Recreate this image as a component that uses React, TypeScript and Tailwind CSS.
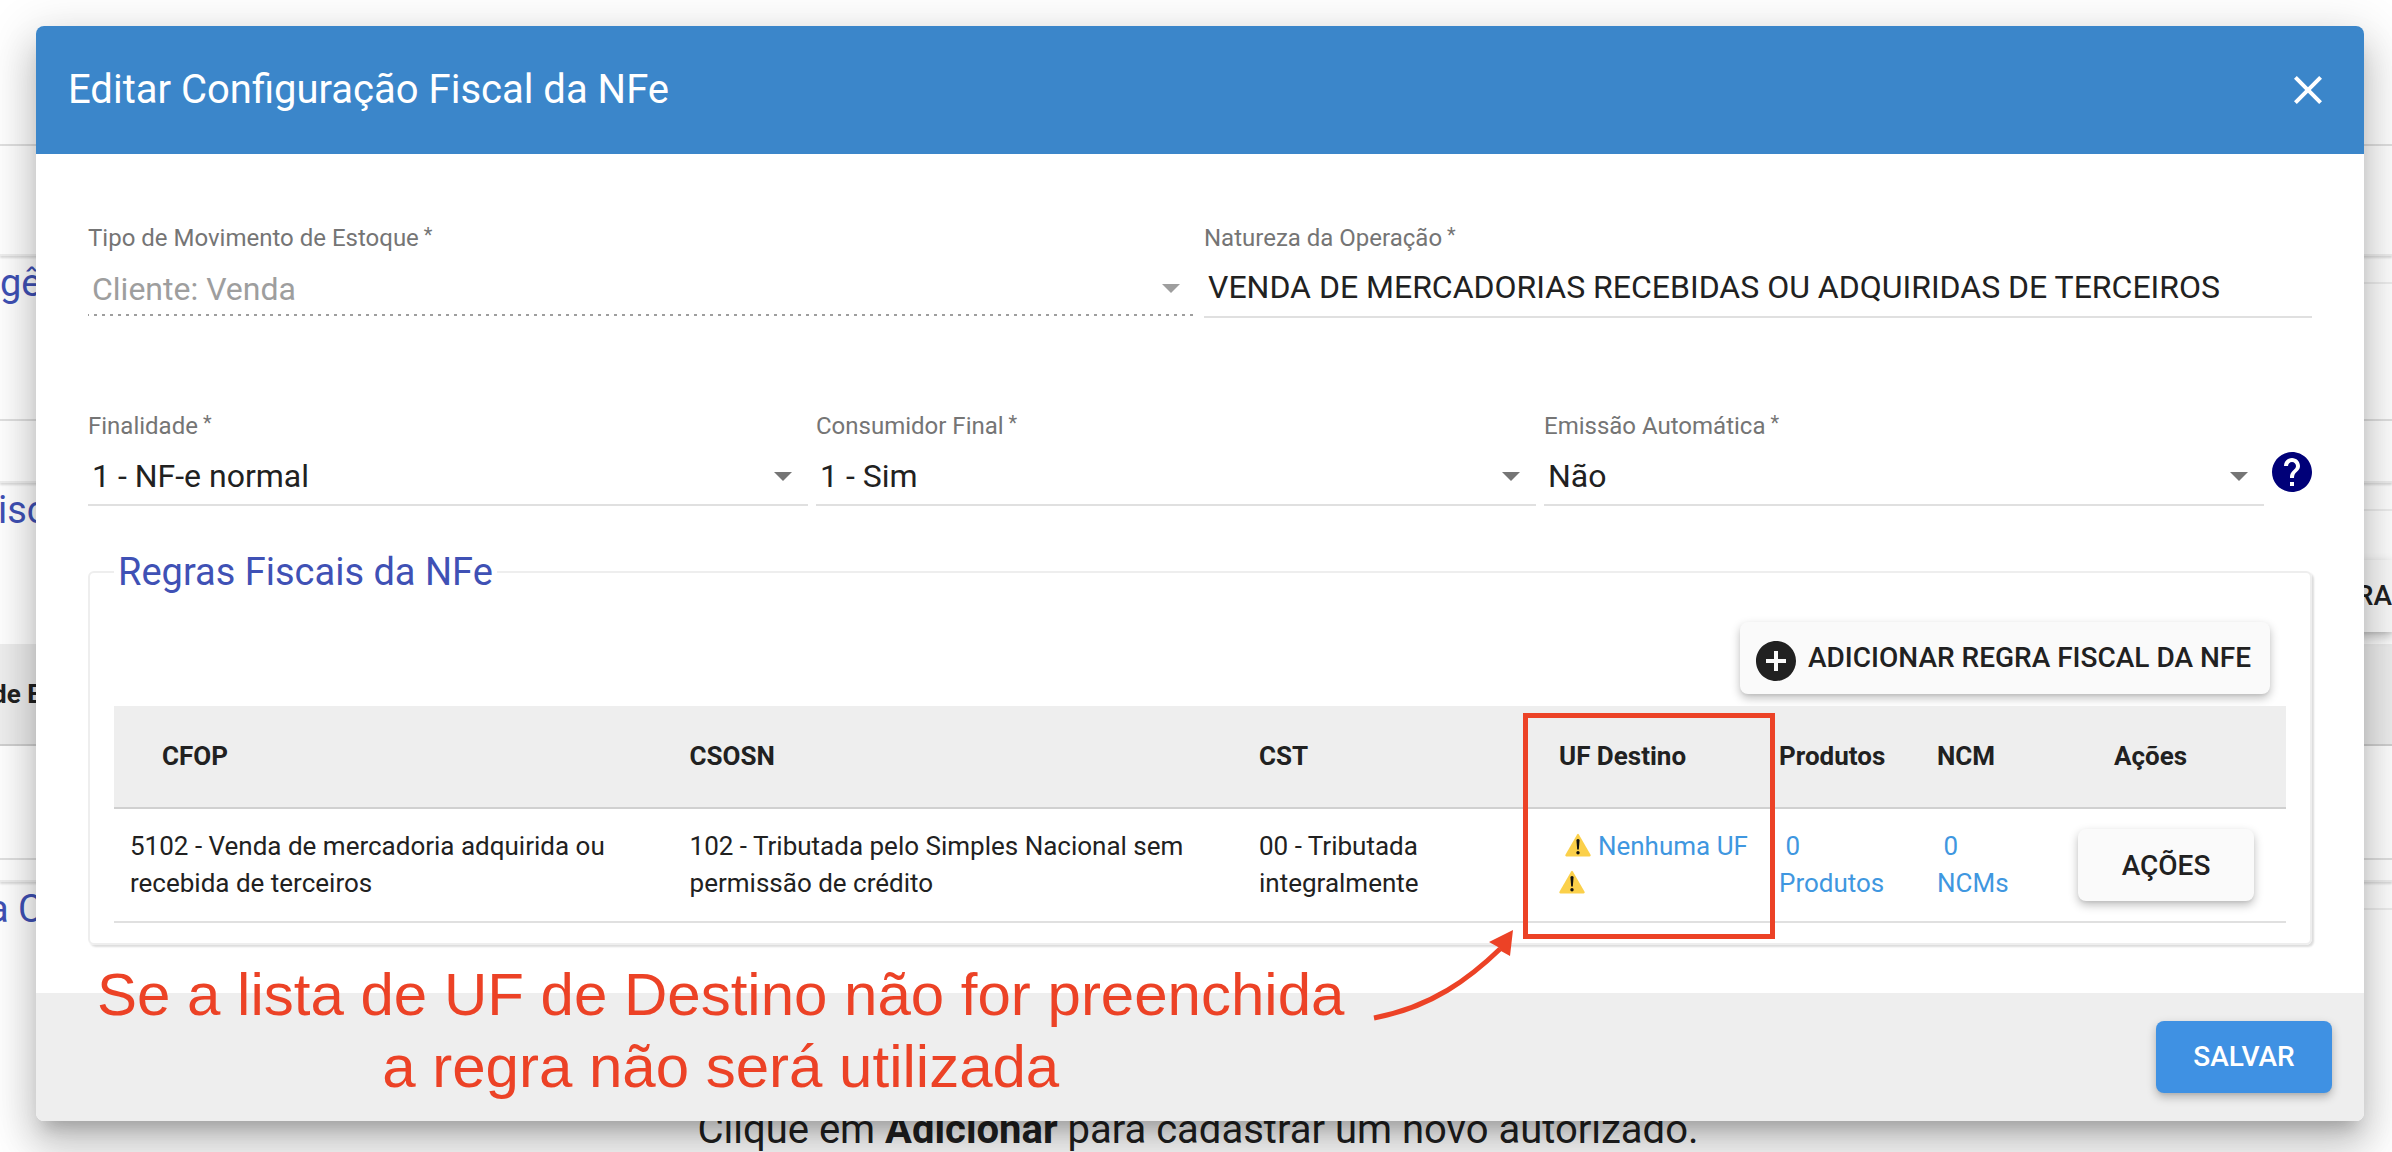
import { useState } from 'react';
import type { ReactNode } from 'react';
import { MdAddCircle, MdClose, MdHelp } from 'react-icons/md';

const raisedShadow =
	'shadow-[0_4px_10px_0_rgba(0,0,0,0.26),0_2px_2px_0_rgba(0,0,0,0.04)]';

function FieldLabel({ id, children }: { id: string; children: ReactNode }) {
	return (
		<label htmlFor={id} className="block text-2xl leading-7 text-[#757575]">
			{children}
			<span className="text-xl leading-none align-[4px]"> *</span>
		</label>
	);
}

type SelectFieldProps = {
	id: string;
	label: string;
	options: string[];
	disabled?: boolean;
};

function SelectField({ id, label, options, disabled }: SelectFieldProps) {
	const [value, setValue] = useState(options[0]);

	return (
		<div className="min-w-0 flex-1">
			<FieldLabel id={id}>{label}</FieldLabel>
			<div className="relative pt-4">
				<select
					id={id}
					value={value}
					disabled={disabled}
					onChange={(event) => setValue(event.target.value)}
					className={
						disabled
							? 'block h-12 w-full appearance-none bg-[linear-gradient(to_right,#9e9e9e_33%,transparent_0)] bg-[length:8px_2px] bg-bottom bg-repeat-x pl-1 pb-1.5 text-[32px] leading-10 text-[#9e9e9e] opacity-100'
							: 'block h-[50px] w-full appearance-none border-b-2 border-[#e0e0e0] pl-1 pb-2 text-[32px] leading-10 text-[#212121]'
					}
				>
					{options.map((option) => (
						<option key={option}>{option}</option>
					))}
				</select>
				<svg
					viewBox="0 0 18 9"
					className={
						disabled
							? 'pointer-events-none absolute right-4 top-8 h-[9px] w-[18px] fill-[#9e9e9e]'
							: 'pointer-events-none absolute right-4 top-8 h-[9px] w-[18px] fill-[#757575]'
					}
				>
					<path d="M0 0h18l-9 9z" />
				</svg>
			</div>
		</div>
	);
}

function WarningIcon() {
	return (
		<svg
			viewBox="0 0 26 24"
			className="inline-block h-6 w-[26px] align-[-2px]"
			role="img"
			aria-label="Atenção"
		>
			<path
				d="M12.1 1.4Q13 .2 13.9 1.4L25.7 22Q26 23.4 24.6 23.4H1.4Q0 23.4.3 22Z"
				fill="#fbd04a"
			/>
			<path d="M11.4 7Q13 5.2 14.6 7L13.8 16.6H12.2Z" fill="#111111" />
			<circle cx="13" cy="19.8" r="1.7" fill="#111111" />
		</svg>
	);
}

function PageLegend({ className, children }: { className?: string; children: ReactNode }) {
	return (
		<div className="flex h-[54px] items-center gap-2">
			<span className={`text-[38px] leading-[44px] text-[#3f51b5] ${className ?? ''}`}>
				{children}
			</span>
			<span className="flex-1 border-t-2 border-[#eeeeee]" />
		</div>
	);
}

// página que fica atrás do diálogo
function BackgroundPage() {
	return (
		<div className="bg-white" aria-hidden="true">
			<div className="h-[146px] border-b-2 border-[#e0e0e0]" />
			<div className="h-[110px] border-b-2 border-[#eeeeee] shadow-[0_2px_2px_#dddddd]" />
			<PageLegend>gê</PageLegend>
			<div className="h-[111px] border-b-2 border-[#e0e0e0]" />
			<div className="h-[62px] border-b-2 border-[#eeeeee] shadow-[0_2px_2px_#dddddd]" />
			<PageLegend className="-ml-0.5">isc</PageLegend>
			<div className="flex h-[107px] items-start justify-end pt-[23px]">
				<div
					className={`flex h-[72px] w-40 items-center justify-end bg-[#fafafa] text-[28px] font-medium ${raisedShadow}`}
				>
					RA
				</div>
			</div>
			<div className="flex h-[102px] items-center border-b-2 border-[#d0d0d0] bg-[#eeeeee] text-[26px] font-bold">
				<span className="-ml-2">de E</span>
			</div>
			<div className="h-[114px] border-b-2 border-[#e0e0e0]" />
			<div className="h-[22px] border-b-2 border-[#eeeeee] shadow-[0_2px_2px_#dddddd]" />
			<PageLegend className="-ml-3">a C</PageLegend>
			<p className="pl-1 pt-[174px] text-center text-[40px] leading-none">
				Clique em <b>Adicionar</b> para cadastrar um novo autorizado.
			</p>
		</div>
	);
}

function RulesTable() {
	const th = 'p-0 text-left font-bold';
	const td = 'h-[114px] border-b-2 border-[#e0e0e0] p-0';
	const link = 'text-[#3f97e0]';

	return (
		<div className="relative mt-3">
			<table className="w-full table-fixed border-separate border-spacing-0 text-[26px] leading-[37px]">
				<colgroup>
					<col className="w-[26.5%]" />
					<col />
					<col className="w-[300px]" />
					<col className="w-[220px]" />
					<col className="w-[158px]" />
					<col className="w-[141px]" />
					<col className="w-[208px]" />
				</colgroup>
				<thead>
					<tr className="h-[103px] bg-[#eeeeee] *:border-b-2 *:border-[#d0d0d0]">
						<th className={`${th} pl-12`}>CFOP</th>
						<th className={th}>CSOSN</th>
						<th className={th}>CST</th>
						<th className={th}>UF Destino</th>
						<th className={th}>Produtos</th>
						<th className={th}>NCM</th>
						<th className={`${th} pl-9`}>Ações</th>
					</tr>
				</thead>
				<tbody>
					<tr>
						<td className={`${td} pl-4 pr-14`}>
							5102 - Venda de mercadoria adquirida ou recebida de terceiros
						</td>
						<td className={`${td} pr-14`}>
							102 - Tributada pelo Simples Nacional sem permissão de crédito
						</td>
						<td className={`${td} pr-14`}>00 - Tributada integralmente</td>
						<td className={td}>
							&nbsp;
							<WarningIcon />{' '}
							<a href="#uf" className={link}>
								Nenhuma UF
							</a>
							<br />
							<WarningIcon />
						</td>
						<td className={td}>
							<a href="#produtos" className={link}>
								&nbsp;0
								<br />
								Produtos
							</a>
						</td>
						<td className={td}>
							<a href="#ncms" className={link}>
								&nbsp;0
								<br />
								NCMs
							</a>
						</td>
						<td className={td}>
							<button
								type="button"
								className={`block h-[72px] w-44 rounded-lg bg-[#fafafa] text-[28px] font-medium ${raisedShadow}`}
							>
								AÇÕES
							</button>
						</td>
					</tr>
				</tbody>
			</table>

			{/* destaque da coluna UF Destino */}
			<div className="pointer-events-none absolute right-[511px] top-[7px] h-[226px] w-[252px] border-5 border-[#ec4226]" />
			<svg
				viewBox="0 0 146 96"
				className="pointer-events-none absolute right-[770px] top-[221px] z-10 h-24 w-[146px]"
			>
				<path
					d="M4 91C62 80 100 51 130 22"
					fill="none"
					stroke="#ec4226"
					strokeWidth="5"
				/>
				<path d="M143 3L119 15L128 20L131 24L140 29Z" fill="#ec4226" />
			</svg>
		</div>
	);
}

function App() {
	const [nature, setNature] = useState(
		'VENDA DE MERCADORIAS RECEBIDAS OU ADQUIRIDAS DE TERCEIROS',
	);

	return (
		<div className="relative min-h-screen overflow-hidden font-[Roboto,sans-serif] text-[#212121]">
			<BackgroundPage />

			<div className="absolute inset-0 pl-9 pr-7 pt-[26px]">
				<div
					role="dialog"
					aria-labelledby="dialog-title"
					className="rounded-lg bg-white shadow-[0_14px_16px_-8px_rgba(0,0,0,0.2),0_26px_38px_4px_rgba(0,0,0,0.14),0_10px_48px_8px_rgba(0,0,0,0.12)]"
				>
					<header className="flex h-32 items-center justify-between rounded-t-lg bg-[#3b86ca] px-8 text-white">
						<h2 id="dialog-title" className="text-[40px] leading-[48px]">
							Editar Configuração Fiscal da NFe
						</h2>
						<button type="button" aria-label="Fechar">
							<MdClose className="size-12" />
						</button>
					</header>

					<form
						className="px-[52px] pb-12 pt-[70px]"
						onSubmit={(event) => event.preventDefault()}
					>
						<div className="flex gap-2">
							<SelectField
								id="movement"
								label="Tipo de Movimento de Estoque"
								options={['Cliente: Venda']}
								disabled
							/>
							<div className="min-w-0 flex-1">
								<FieldLabel id="nature">Natureza da Operação</FieldLabel>
								<input
									id="nature"
									type="text"
									value={nature}
									onChange={(event) => setNature(event.target.value)}
									className="mt-4 block h-[50px] w-full border-b-2 border-[#e0e0e0] pb-2.5 pl-1 text-[32px] leading-10"
								/>
							</div>
						</div>

						<div className="mt-[94px] flex gap-2">
							<SelectField
								id="purpose"
								label="Finalidade"
								options={['1 - NF-e normal']}
							/>
							<SelectField
								id="consumer"
								label="Consumidor Final"
								options={['1 - Sim', '0 - Não']}
							/>
							<SelectField
								id="automatic"
								label="Emissão Automática"
								options={['Não', 'Sim']}
							/>
							<button
								type="button"
								aria-label="Ajuda"
								className="-mx-1 mb-2.5 self-end text-[#000078]"
							>
								<MdHelp className="size-12" />
							</button>
						</div>

						<fieldset className="mt-11 rounded-md border-2 border-[#eeeeee] px-6 pb-5 shadow-[2px_2px_2px_#dddddd]">
							<legend className="px-1 text-[38px] leading-[44px] text-[#3f51b5]">
								Regras Fiscais da NFe
							</legend>
							<div className="flex justify-end pr-4 pt-7">
								<button
									type="button"
									className={`flex h-[72px] w-[530px] items-center gap-2 rounded-lg bg-[#fafafa] pl-3 text-[28px] font-medium ${raisedShadow}`}
								>
									<MdAddCircle className="mt-1.5 size-12" />
									ADICIONAR REGRA FISCAL DA NFE
								</button>
							</div>
							<RulesTable />
						</fieldset>
					</form>

					<footer className="relative flex h-32 items-center justify-end rounded-b-lg bg-[#eeeeee] px-8">
						<p className="pointer-events-none absolute -top-[34px] left-[61px] text-center font-['Liberation_Sans',Arial,sans-serif] text-[60px] leading-[72px] text-[#ec4226]">
							Se a lista de UF de Destino não for preenchida
							<br />a regra não será utilizada
						</p>
						<button
							type="button"
							className={`h-[72px] w-44 rounded-lg bg-[#3f91e3] text-[28px] font-medium text-white ${raisedShadow}`}
						>
							SALVAR
						</button>
					</footer>
				</div>
			</div>
		</div>
	);
}

export default App;
